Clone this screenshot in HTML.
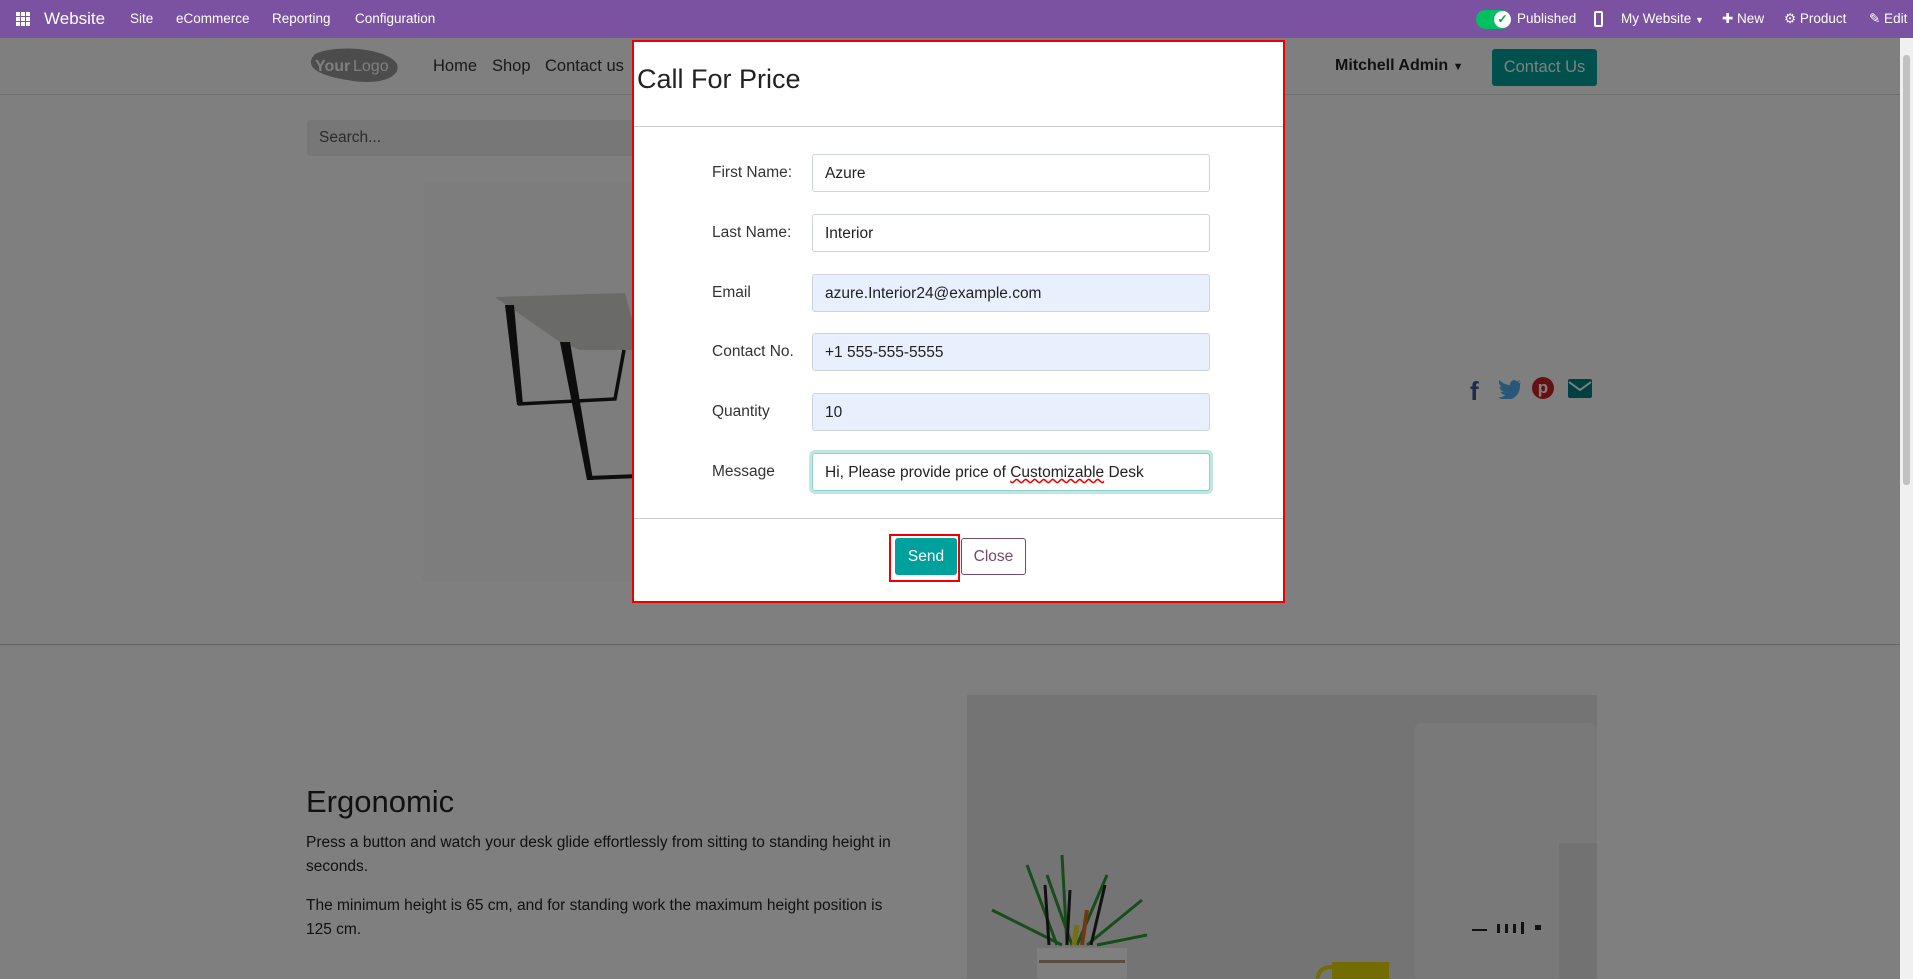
<!DOCTYPE html>
<html><head><meta charset="utf-8">
<style>
*{box-sizing:border-box;margin:0;padding:0}
html,body{width:1913px;height:979px;overflow:hidden}
body{font-family:"Liberation Sans",sans-serif;background:#fff;position:relative}
.bar{position:absolute;left:0;top:0;width:1913px;height:38px;background:#7b52a1;color:#fff;font-size:13.5px}
.bar span{position:absolute;top:11px;white-space:nowrap}
.page{position:absolute;left:0;top:38px;width:1913px;height:941px;background:#fff;overflow:hidden}
.ov{position:absolute;left:0;top:38px;width:1900px;height:941px;background:rgba(0,0,0,.5)}
.abs{position:absolute}
.modal{position:absolute;left:632px;top:40px;width:653px;height:563px;background:#fff;border:2px solid #e00;}
.lbl{position:absolute;left:78px;font-size:15.5px;color:#333}
.inp{position:absolute;left:178px;width:398px;height:38px;border:1px solid #ced4da;border-radius:3px;font-size:15.5px;color:#222;padding:10px 12px;line-height:17px;white-space:nowrap}
.blue{background:#e8f0fe}
</style></head><body>
<div class="page">
  <svg class="abs" style="left:307px;top:8px" width="92" height="40" viewBox="0 0 92 40"><path d="M8 8 C30 -2 80 2 90 18 C95 32 70 40 40 34 C15 30 -5 22 8 8Z" fill="#999"/><text x="8" y="25" font-size="16" font-weight="bold" fill="#fff" font-family="Liberation Sans">Your</text><text x="46" y="25" font-size="16" fill="#fff" font-family="Liberation Sans">Logo</text></svg>
  <div class="abs" style="left:433px;top:19px;font-size:16.5px;color:#333">Home</div>
  <div class="abs" style="left:492px;top:19px;font-size:16.5px;color:#333">Shop</div>
  <div class="abs" style="left:545px;top:19px;font-size:16.5px;color:#333">Contact us</div>
  <div class="abs" style="left:1335px;top:19px;font-size:16px;color:#222;font-weight:bold;white-space:nowrap">Mitchell Admin <span style="font-size:11px">▼</span></div>
  <div class="abs" style="left:1492px;top:11px;width:105px;height:37px;background:#00a09d;border-radius:3px;color:#fff;font-size:16.5px;text-align:center;line-height:37px">Contact Us</div>
  <div class="abs" style="left:0;top:56px;width:1900px;height:1px;background:#ddd"></div>
  <div class="abs" style="left:307px;top:82px;width:340px;height:36px;background:#eee;border-radius:3px;font-size:15.5px;color:#555;padding:9px 12px">Search...</div>
  <div class="abs" style="left:422px;top:144px;width:220px;height:399px;background:#fafafa"></div>
  <svg class="abs" style="left:420px;top:232px" width="230" height="230">
    <polygon points="75,27 205,23 220,80 160,80 140,72" fill="#d4d4d2"/>
    <polygon points="85,35 94,35 103,135 97,135" fill="#1a1a1a"/>
    <path d="M98 134 L195 129 L204 80" stroke="#1a1a1a" stroke-width="3.5" fill="none"/>
    <polygon points="140,72 150,72 173,210 167,210" fill="#1a1a1a"/>
    <path d="M168 208 L220 206" stroke="#1a1a1a" stroke-width="4" fill="none"/>
  </svg>
  <div class="abs" style="left:1470px;top:338px;font-size:26px;font-weight:bold;color:#3b5998">f</div>
  <svg class="abs" style="left:1498px;top:341px" width="24" height="20" viewBox="0 0 24 20"><path d="M23 3 C22 4 21 4 20 4 C21 3 22 2 22 1 C21 2 20 2 19 2.5 C17 0 12 1 12 6 C8 6 4 4 1.5 1 C0 4 2 7 4 8 C3 8 2 8 1.5 7.5 C1.5 10 3.5 12 5.5 12.5 C4.5 13 3.5 13 2.5 12.8 C3.5 15 5.5 16 7.5 16 C5 18 2.5 18.5 0 18.3 C11 25 23 18 22 5 Z" fill="#55acee"/></svg>
  <div class="abs" style="left:1532px;top:339px;width:22px;height:22px;background:#cb2027;border-radius:50%;color:#fff;font-weight:bold;font-size:17px;text-align:center;line-height:21px">p</div>
  <svg class="abs" style="left:1568px;top:341px" width="24" height="19"><rect width="24" height="19" rx="2" fill="#017e84"/><path d="M1 3 L12 11 L23 3" stroke="#fff" stroke-width="2" fill="none"/></svg>
  <div class="abs" style="left:0;top:606px;width:1900px;height:1px;background:#ccc"></div>
  <div class="abs" style="left:306px;top:746px;font-size:31px;color:#222">Ergonomic</div>
  <div class="abs" style="left:306px;top:793px;width:590px;font-size:15.5px;line-height:24px;color:#222">Press a button and watch your desk glide effortlessly from sitting to standing height in seconds.</div>
  <div class="abs" style="left:306px;top:856px;width:590px;font-size:15.5px;line-height:24px;color:#222">The minimum height is 65 cm, and for standing work the maximum height position is 125 cm.</div>
  <svg class="abs" style="left:967px;top:657px" width="630" height="284" viewBox="0 0 630 284">
    <rect width="630" height="284" fill="#e8e8e8"/>
    <rect x="447" y="28" width="183" height="260" rx="8" fill="#f2f2f2"/>
    <rect x="592" y="148" width="38" height="140" fill="#e4e4e4"/>
    <g fill="#222"><rect x="505" y="234" width="15" height="2"/><rect x="530" y="229" width="3" height="9"/><rect x="538" y="229" width="3" height="9"/><rect x="546" y="229" width="3" height="9"/><rect x="554" y="227" width="3" height="12"/><rect x="568" y="230" width="6" height="5"/></g>
    <path d="M90 250 L60 170 M100 250 L95 160 M110 250 L140 180 M120 250 L175 205 M95 250 L25 215 M130 250 L180 240 M105 250 L80 180" stroke="#2f9a35" stroke-width="3" fill="none"/>
    <path d="M82 250 L78 190 M100 250 L103 195 M124 250 L138 190" stroke="#222" stroke-width="3"/>
    <path d="M115 250 L120 215" stroke="#e07020" stroke-width="4"/>
    <path d="M107 250 L110 230" stroke="#e8e020" stroke-width="5"/>
    <rect x="70" y="253" width="90" height="31" fill="#fff"/>
    <rect x="72" y="265" width="86" height="3" fill="#b09a80"/>
    <rect x="365" y="267" width="57" height="17" fill="#e6d800"/>
    <path d="M365 272 C350 272 350 284 352 284" stroke="#e6d800" stroke-width="4" fill="none"/>
  </svg>
</div>
<div class="ov"></div>
<div class="abs" style="left:1900px;top:38px;width:13px;height:941px;background:#f0f0f0"></div>
<div class="abs" style="left:1903px;top:55px;width:7px;height:430px;background:#c1c1c1;border-radius:3px"></div>
<div class="bar">
  <svg class="abs" style="left:16px;top:12px" width="14" height="14"><g fill="#fff"><rect x="0" y="0" width="4" height="4"/><rect x="5" y="0" width="4" height="4"/><rect x="10" y="0" width="4" height="4"/><rect x="0" y="5" width="4" height="4"/><rect x="5" y="5" width="4" height="4"/><rect x="10" y="5" width="4" height="4"/><rect x="0" y="10" width="4" height="4"/><rect x="5" y="10" width="4" height="4"/><rect x="10" y="10" width="4" height="4"/></g></svg>
  <span style="left:44px;top:9px;font-size:17px">Website</span>
  <span style="left:130px">Site</span><span style="left:176px">eCommerce</span><span style="left:272px">Reporting</span><span style="left:355px">Configuration</span>
  <div class="abs" style="left:1476px;top:10px;width:35px;height:19px;background:#00c060;border-radius:10px"></div>
  <div class="abs" style="left:1494px;top:11px;width:17px;height:17px;background:#fff;border-radius:50%;color:#00a050;font-size:12px;text-align:center;line-height:17px;font-weight:bold">✓</div>
  <span style="left:1517px">Published</span>
  <div class="abs" style="left:1594px;top:11px;width:9px;height:16px;border:2px solid #fff;border-radius:2px"></div>
  <span style="left:1621px">My Website <small style="font-size:9px">▼</small></span>
  <span style="left:1722px">✚ New</span>
  <span style="left:1784px">⚙ Product</span>
  <span style="left:1869px">✎ Edit</span>
</div>
<div class="modal">
  <div class="abs" style="left:3px;top:22px;font-size:27px;color:#222">Call For Price</div>
  <div class="abs" style="left:0;top:84px;width:649px;height:1px;background:#ccc"></div>
  <div class="lbl" style="top:122px">First Name:</div><div class="inp" style="top:112px">Azure</div>
  <div class="lbl" style="top:182px">Last Name:</div><div class="inp" style="top:172px">Interior</div>
  <div class="lbl" style="top:242px">Email</div><div class="inp blue" style="top:232px">azure.Interior24@example.com</div>
  <div class="lbl" style="top:301px">Contact No.</div><div class="inp blue" style="top:291px">+1 555-555-5555</div>
  <div class="lbl" style="top:361px">Quantity</div><div class="inp blue" style="top:351px">10</div>
  <div class="lbl" style="top:421px">Message</div><div class="inp" style="top:411px;border-color:#8fd3d1;box-shadow:0 0 0 3px #bfe6e5">Hi, Please provide price of <span style="text-decoration:underline wavy #e00">Customizable</span> Desk</div>
  <div class="abs" style="left:0;top:476px;width:649px;height:1px;background:#ccc"></div>
  <div class="abs" style="left:255px;top:492px;width:71px;height:48px;border:2px solid #e00"></div>
  <div class="abs" style="left:261px;top:496px;width:62px;height:37px;background:#00a09d;border-radius:3px;color:#fff;font-size:15.5px;text-align:center;line-height:37px">Send</div>
  <div class="abs" style="left:327px;top:496px;width:65px;height:37px;border:1px solid #714b67;border-radius:3px;color:#714b67;font-size:15.5px;text-align:center;line-height:35px">Close</div>
</div>
</body></html>
